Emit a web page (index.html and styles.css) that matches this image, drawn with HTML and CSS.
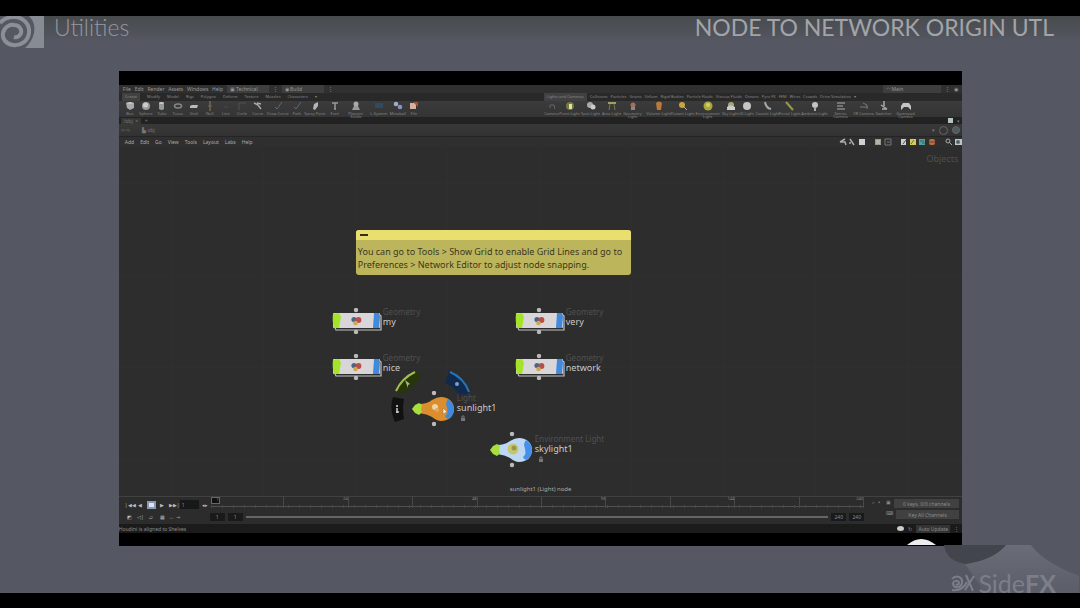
FILE: index.html
```html
<!DOCTYPE html>
<html lang="en">
<head>
<meta charset="utf-8">
<title>Node to Network Origin UTL</title>
<link rel="stylesheet" href="styles.css">
</head>
<body>
<svg class="defs" aria-hidden="true">
  <symbol id="box" viewBox="0 0 10 10"><path d="M1 2l4-1 4 1v5L5 9 2 7z" fill="#a9a9a9"/><path d="M1 2l4 1 4-1-4-1z" fill="#ccc"/></symbol>
  <symbol id="ball" viewBox="0 0 10 10"><circle cx="5" cy="5" r="4" fill="#999"/><circle cx="4.500" cy="4" r="2.500" fill="#ccc"/></symbol>
  <symbol id="tube" viewBox="0 0 10 10"><path d="M2 2v6q3 2 5 0V2z" fill="#999"/><ellipse cx="4.500" cy="2" rx="2.500" ry="1" fill="#ccc"/></symbol>
  <symbol id="torus" viewBox="0 0 10 10"><ellipse cx="5" cy="5" rx="3.500" ry="2" fill="none" stroke="#888" stroke-width="1.500"/></symbol>
  <symbol id="grid" viewBox="0 0 10 10"><path d="M1 5l2-1h6L8 7H1z" fill="#bbb"/></symbol>
  <symbol id="null" viewBox="0 0 10 10"><path d="M5 0v10" stroke="#96804e"/><path d="M3 5h4" stroke="#666"/></symbol>
  <symbol id="line" viewBox="0 0 10 10"><path d="M3 6h4" stroke="#4a4a4a"/></symbol>
  <symbol id="arc" viewBox="0 0 10 10"><path d="M2 9V2h7" fill="none" stroke="#505050"/></symbol>
  <symbol id="curve" viewBox="0 0 10 10"><path d="M1 2l4 2 3 4M4 2l4 1" fill="none" stroke="#aaa" stroke-width="1.500"/></symbol>
  <symbol id="pen" viewBox="0 0 10 10"><path d="M2 6l2 2 5-7" fill="none" stroke="#5c6875"/></symbol>
  <symbol id="spray" viewBox="0 0 10 10"><path d="M3 8l1-5 4-2v4L5 9z" fill="#b5b5b5"/></symbol>
  <symbol id="type" viewBox="0 0 10 10"><path d="M2 2h6M5 2v6M4 8h2" fill="none" stroke="#999" stroke-width="1.500"/></symbol>
  <symbol id="solids" viewBox="0 0 10 10"><circle cx="5" cy="3" r="2.500" fill="#aaa"/><path d="M1 9l2-4h4l2 4z" fill="#999"/></symbol>
  <symbol id="lsys" viewBox="0 0 10 10"><path d="M1 2h8v5H1z" fill="#304a60"/></symbol>
  <symbol id="meta" viewBox="0 0 10 10"><circle cx="3" cy="3" r="2.300" fill="#9eaccc"/><circle cx="7" cy="6" r="2.300" fill="#8294c4"/></symbol>
  <symbol id="file" viewBox="0 0 10 10"><path d="M1 2h6v6H1z" fill="#d5b3a0"/><path d="M4 1h5v5z" fill="#a9502c"/></symbol>
  <symbol id="cam" viewBox="0 0 10 10"><path d="M3 7V4h4l1 4" fill="none" stroke="#666"/></symbol>
  <symbol id="bulb" viewBox="0 0 10 10"><circle cx="5" cy="5" r="4" fill="#77783c"/><path d="M4 3h3v5H4z" fill="#e0e0ac"/></symbol>
  <symbol id="spot" viewBox="0 0 10 10"><circle cx="4" cy="4" r="3" fill="#aaa"/><circle cx="7" cy="6" r="2.500" fill="#ccc"/></symbol>
  <symbol id="area" viewBox="0 0 10 10"><path d="M1 2h8" stroke="#b9ba6b" stroke-width="1.600"/><path d="M3 3L2 9M7 3l1 6" stroke="#777a47"/></symbol>
  <symbol id="geo" viewBox="0 0 10 10"><circle cx="5" cy="4" r="2.500" fill="#a76e60"/><path d="M3 6h4v3H3z" fill="#888"/></symbol>
  <symbol id="vol" viewBox="0 0 10 10"><path d="M2 2q3-3 6 0L7 9H3z" fill="#ba7939"/></symbol>
  <symbol id="dist" viewBox="0 0 10 10"><circle cx="4" cy="4" r="3" fill="#c9a438"/><path d="M5 5l4 4" stroke="#d8b849"/></symbol>
  <symbol id="env" viewBox="0 0 10 10"><circle cx="5" cy="5" r="4.500" fill="#aaa83d"/><circle cx="5" cy="4" r="2" fill="#d2ce72"/></symbol>
  <symbol id="sky" viewBox="0 0 10 10"><circle cx="5" cy="4" r="3" fill="#aaa77a"/><path d="M1 6q3-3 8 0v3H1z" fill="#ccc"/></symbol>
  <symbol id="gi" viewBox="0 0 10 10"><circle cx="5" cy="5" r="4" fill="#c6c6c6"/></symbol>
  <symbol id="caustic" viewBox="0 0 10 10"><path d="M2 1q1 6 6 7" fill="none" stroke="#a7a7a7" stroke-width="2"/></symbol>
  <symbol id="portal" viewBox="0 0 10 10"><path d="M1 1l7 8" stroke="#949b45" stroke-width="2"/></symbol>
  <symbol id="amb" viewBox="0 0 10 10"><circle cx="5" cy="4" r="3" fill="#c4c4c4"/><path d="M4 6h2v4H4z" fill="#aaa"/></symbol>
  <symbol id="stereo" viewBox="0 0 10 10"><path d="M1 2h8M1 5h6M1 8h8" stroke="#888" stroke-width="1.400"/></symbol>
  <symbol id="vr" viewBox="0 0 10 10"><path d="M1 6h8M4 2l4 2v4" fill="none" stroke="#777"/></symbol>
  <symbol id="switch" viewBox="0 0 10 10"><path d="M5 0v5M2 4l6 4M3 8h5" stroke="#aaa" stroke-width="1.500"/></symbol>
  <symbol id="pad" viewBox="0 0 10 10"><path d="M0 9V5l2-3h6l2 3v4L7 6H3z" fill="#c5c5c5"/></symbol>
  <symbol id="geonode" viewBox="0 0 50 26">
    <circle cx="24" cy="2" r="2.200" fill="#b9b9b9"/><circle cx="24" cy="24" r="2.200" fill="#b9b9b9"/>
    <path d="M3 20l1 2h45V8l-1-1" fill="none" stroke="#c4c4c4" stroke-width="1.200"/><rect x="1" y="5" width="47" height="15" rx="1" fill="#d9d6da"/>
    <path d="M1 6l6-1 2 4-2 11H2q-2-8-1-14z" fill="#a5e32b"/><path d="M42 5h5l1 3-1 12h-6z" fill="#4189db"/>
    <circle cx="22" cy="11.500" r="2.600" fill="#506481"/><circle cx="26.500" cy="12" r="2.900" fill="#b84e45"/><circle cx="23.500" cy="15" r="2.300" fill="#c9a950"/>
  </symbol>
  <symbol id="lock" viewBox="0 0 6 6"><path d="M1 3h4v3H1z" fill="#777"/><path d="M2 3V1h2v2" fill="none" stroke="#777"/></symbol>
</svg>

<div class="letterbox"></div>
<div class="slide">
  <header class="slide-head">
    <svg class="spiral" viewBox="0 0 44 32" aria-hidden="true">
      <rect width="44" height="32" fill="#878b94"/>
      <path d="M0 0h29q7 7 5 17-2 9-9 15H0z" fill="#555761"/>
      <path d="M0 7Q5 1 14 1c9 0 16 7 15 16-1 8-8 13-16 12C6 28 2 23 3 17c1-5 6-9 11-8 5 0 8 4 7 8-1 3-4 5-7 4" fill="none" stroke="#8b8f98" stroke-width="4"/>
    </svg>
    <span class="section">Utilities</span>
    <h1>NODE TO NETWORK ORIGIN UTL</h1>
  </header>

  <main class="window">
    <div class="app">
      <nav class="menubar">
        <div class="menus"><button>File</button><button>Edit</button><button>Render</button><button>Assets</button><button>Windows</button><button>Help</button></div>
        <button class="desk">▣ Technical</button><span>⋮</span><button class="desk">◉ Build</button><span>⋮</span>
        <button class="desk main-desk">◠ Main</button><span>⋮</span><span>◉</span>
      </nav>

      <div class="shelves">
        <section class="shelf">
          <div class="tabs"><button class="on">Create</button><button>Modify</button><button>Model</button><button>Rigs</button><button>Polygon</button><button>Deform</button><button>Texture</button><button>Muscles</button><button>Characters</button><button>▾</button></div>
          <div class="tools tools-create">
            <button><svg><use href="#box"/></svg>Box</button><button><svg><use href="#ball"/></svg>Sphere</button><button><svg><use href="#tube"/></svg>Tube</button><button><svg><use href="#torus"/></svg>Torus</button><button><svg><use href="#grid"/></svg>Grid</button><button><svg><use href="#null"/></svg>Null</button><button><svg><use href="#line"/></svg>Line</button><button><svg><use href="#arc"/></svg>Circle</button><button><svg><use href="#curve"/></svg>Curve</button><button><svg><use href="#pen"/></svg>Draw Curve</button><button><svg><use href="#pen"/></svg>Path</button><button><svg><use href="#spray"/></svg>Spray Paint</button><button><svg><use href="#type"/></svg>Font</button><button><svg><use href="#solids"/></svg>Platonic<br>Solids</button><button><svg><use href="#lsys"/></svg>L-System</button><button><svg><use href="#meta"/></svg>Metaball</button><button><svg><use href="#file"/></svg>File</button>
          </div>
        </section>
        <section class="shelf">
          <div class="tabs tabs-tight"><button class="on">Lights and Cameras</button><button>Collisions</button><button>Particles</button><button>Grains</button><button>Vellum</button><button>Rigid Bodies</button><button>Particle Fluids</button><button>Viscous Fluids</button><button>Oceans</button><button>Pyro FX</button><button>FEM</button><button>Wires</button><button>Crowds</button><button>Drive Simulation</button><button>▾</button></div>
          <div class="tools tools-lights">
            <button><svg><use href="#cam"/></svg>Camera</button><button><svg><use href="#bulb"/></svg>Point Light</button><button><svg><use href="#spot"/></svg>Spot Light</button><button><svg><use href="#area"/></svg>Area Light</button><button><svg><use href="#geo"/></svg>Geometry<br>Light</button><button><svg><use href="#vol"/></svg>Volume Light</button><button><svg><use href="#dist"/></svg>Distant Light</button><button><svg><use href="#env"/></svg>Environment<br>Light</button><button><svg><use href="#sky"/></svg>Sky Light</button><button><svg><use href="#gi"/></svg>GI Light</button><button><svg><use href="#caustic"/></svg>Caustic Light</button><button><svg><use href="#portal"/></svg>Portal Light</button><button><svg><use href="#amb"/></svg>Ambient Light</button><button><svg><use href="#stereo"/></svg>Stereo<br>Camera</button><button><svg><use href="#vr"/></svg>VR Camera</button><button><svg><use href="#switch"/></svg>Switcher</button><button><svg><use href="#pad"/></svg>Gamepad<br>Camera</button>
          </div>
        </section>
      </div>

      <div class="panetabs"><button class="current">/obj &nbsp;×</button><button>+</button><span class="push swatch"></span><span>▾</span></div>
      <div class="pathbar"><button>⇦ ⇨</button><button class="obj">▙ obj</button><span class="push">▾</span><span class="ring"></span><span class="ring globe"></span></div>
      <nav class="netmenu">
        <button>Add</button><button>Edit</button><button>Go</button><button>View</button><button>Tools</button><button>Layout</button><button>Labs</button><button>Help</button>
        <svg class="neticons" viewBox="0 0 124 10" aria-hidden="true">
          <path d="M2 5l5-3M2 5h5l1 3M12 2l4 6M12 7v-2" stroke="#aaa" stroke-width="1.500" fill="none"/>
          <rect x="21" y="2" width="6" height="6" fill="#d0d0d0"/><rect x="37" y="2" width="6" height="6" fill="#999c88"/><path d="M38 4h4M38 6h4" stroke="#ccc"/>
          <path d="M47 2h6v6h-6zM49 5h3" fill="none" stroke="#777"/>
          <path d="M63 2h5v6h-5z" fill="#ccc"/><path d="M65 7l3-4" stroke="#555"/><rect x="72" y="2" width="6" height="6" fill="#d6cd55"/><path d="M73 7l3-4" stroke="#666"/>
          <rect x="81" y="2" width="6" height="6" fill="#54a09c"/><path d="M82 4h4M84 6h3" stroke="#2f6568"/><rect x="91" y="2" width="6" height="6" rx="2" fill="#be6e3d"/><path d="M91 5h6" stroke="#69452f"/>
          <circle cx="110" cy="4" r="2" fill="none" stroke="#aaa"/><path d="M111 5l3 3" stroke="#aaa"/><rect x="117" y="2" width="7" height="6" fill="#bcc4cc"/><circle cx="120" cy="5" r="2" fill="#566"/>
        </svg>
      </nav>

      <section class="network">
        <span class="context">Objects</span>
        <article class="note"><div class="note-head"><button aria-label="Minimize note"></button></div><p>You can go to Tools &gt; Show Grid to enable Grid Lines and go to Preferences &gt; Network Editor to adjust node snapping.</p></article>

        <div class="node n-my"><svg class="geo"><use href="#geonode"/></svg><div><small>Geometry</small><b>my</b></div></div>
        <div class="node n-very"><svg class="geo"><use href="#geonode"/></svg><div><small>Geometry</small><b>very</b></div></div>
        <div class="node n-nice"><svg class="geo"><use href="#geonode"/></svg><div><small>Geometry</small><b>nice</b></div></div>
        <div class="node n-network"><svg class="geo"><use href="#geonode"/></svg><div><small>Geometry</small><b>network</b></div></div>

        <svg class="radial" viewBox="0 0 84 54" aria-hidden="true">
          <path d="M6 21Q12 8 26 1l6 4-7 8-10 9z" fill="#263609"/><path d="M6 20Q12 7 25 1" fill="none" stroke="#a3bd54" stroke-width="2"/><path d="M15 9l5 4-2 1v3z" fill="#a9b894"/>
          <path d="M59 1q14 6 20 21l-10 3q-2-8-14-13z" fill="#10294d"/><path d="M60 1q14 6 19 20" fill="none" stroke="#2973b4" stroke-width="2"/><circle cx="67" cy="13" r="2" fill="#7aa0c4"/>
          <path d="M3 26l11 2q-2 10 0 20l-9 3Q-1 38 3 26z" fill="#111"/><circle cx="7" cy="35" r="1" fill="#ddd"/><path d="M7 37v5M6 41h3" fill="none" stroke="#ccc" stroke-width="1.500"/>
        </svg>
        <div class="node n-sun">
          <svg class="light" viewBox="0 0 44 36" aria-hidden="true"><circle cx="23" cy="2" r="2.200" fill="#bbb"/><circle cx="23" cy="33" r="2.200" fill="#bbb"/><path d="M8 13q8 0 13-4 5-3 9-3c8 0 13 5 13 12s-5 12-13 12q-4 0-9-4-5-3-13-4z" fill="#dc8d2e"/><path d="M1 18l3-4 4-2 3 2-1 4 1 3-3 3-4-2z" fill="#a7df3d"/><path d="M37 8c8 5 8 16 0 20-3-2-4-3-1-5 1-3 0-7-1-10 0-2 1-3 2-5z" fill="#4189dc"/><circle cx="24" cy="16" r="3" fill="#ecd3a8"/><circle cx="26" cy="19" r="2" fill="#e3a65b"/><path d="M32 17l4 4-2 1-2 1z" fill="#eee" stroke="#776" stroke-width=".5"/></svg>
          <div><small>Light</small><b>sunlight1</b><svg class="lock"><use href="#lock"/></svg></div>
        </div>
        <div class="node n-sky">
          <svg class="light" viewBox="0 0 44 36" aria-hidden="true"><circle cx="23" cy="2" r="2.200" fill="#bbb"/><circle cx="23" cy="33" r="2.200" fill="#bbb"/><path d="M8 13q8 0 13-4 5-3 9-3c8 0 13 5 13 12s-5 12-13 12q-4 0-9-4-5-3-13-4z" fill="#bcd8f5"/><path d="M1 18l3-4 4-2 3 2-1 4 1 3-3 3-4-2z" fill="#a7df3d"/><path d="M37 8c8 5 8 16 0 20-3-2-4-3-1-5 1-3 0-7-1-10 0-2 1-3 2-5z" fill="#4590e8"/><circle cx="24" cy="17" r="5.500" fill="#c7c66b"/><circle cx="25" cy="16" r="2.500" fill="#999456"/></svg>
          <div><small>Environment Light</small><b>skylight1</b><svg class="lock"><use href="#lock"/></svg></div>
        </div>
        <span class="hint">sunlight1 (Light) node</span>
      </section>

      <footer class="playbar">
        <div class="transport">
          <div><button>|◀◀</button><button>◀</button><button class="stop" aria-label="Stop"></button><button>▶</button><button>▶▶|</button><input aria-label="Frame" value="1"><button>◂▸</button></div>
          <div><button>◩</button><button>◁|</button><button>▱</button><button>▦</button><span>↔</span><span>⇥</span></div>
        </div>
        <div class="timeline">
          <div class="ruler"><span class="playhead">1</span><span></span><span>24</span><span></span><span>48</span><span></span><span>96</span><span></span><span>144</span><span></span><span>240</span></div>
          <div class="range"><input aria-label="Start" value="1"><input aria-label="Range start" value="1"><span class="track"></span><input aria-label="Range end" value="240"><input aria-label="End" value="240"></div>
        </div>
        <div class="keys">
          <span>⌕ &nbsp;▾</span>
          <div><div><span>▣</span><button>0 keys, 0/0 channels</button></div><div><span>⌨</span><button>Key All Channels</button></div></div>
        </div>
      </footer>
      <div class="status"><span>Houdini is aligned to Shelves</span><span class="dot"></span><span>↻</span><button>Auto Update</button><span>⋮</span></div>
    </div>
  </main>

  <footer class="brand">
    <svg class="swoosh" viewBox="0 0 180 54" aria-hidden="true">
      <defs><linearGradient id="haze" x1="0" y1="0" x2="0" y2="1"><stop offset="0" stop-color="#6a6d78"/><stop offset="1" stop-color="#5b5e69"/></linearGradient></defs>
      <path d="M104 6h27q12 17 48 31v17H85L65 25q30-4 39-19z" fill="url(#haze)"/>
      <path d="M44 6h62Q95 20 66 25 46 22 44 6z" fill="#42454c"/>
      <path d="M7 6Q21-6 36 6z" fill="#eee"/>
    </svg>
    <div class="sidefx"><svg viewBox="0 0 24 18" aria-hidden="true"><path d="M1 5c4-5 11-2 10 4-1 5-8 6-9 1 0-4 6-4 6-1 0 2-2 2-3 1M1 16c7 1 12-2 15-8M15 1l7 16M23 2l-9 14" fill="none" stroke="#7c7f89" stroke-width="2"/></svg><span>Side<strong>FX</strong></span></div>
  </footer>
</div>
<div class="letterbox"></div>
</body>
</html>
```

FILE: styles.css
```css
* { box-sizing: border-box; }
body { margin: 0; min-height: 100vh; display: flex; flex-direction: column; background: #000; font-family: "Noto Sans", sans-serif; }
button, input { font: inherit; color: inherit; background: none; border: 0; padding: 0; margin: 0; min-width: 0; white-space: nowrap; }
.defs { display: none; }
.letterbox { height: 15px; flex: none; }
.slide { flex: 1; display: flex; flex-direction: column; background: #555762; border-top: 1px solid #000; }

.slide-head { height: 55px; display: flex; align-items: flex-start; font: 23px/22px Lato, sans-serif; color: #9698a0; background: linear-gradient(#484b4d, #50535b 18px, #555762 24px); }
.spiral { width: 44px; height: 32px; }
.section { margin-left: 10px; font-weight: 300; }
h1 { margin: 0 26px 0 auto; font: 400 23px/22px Lato, sans-serif; color: #a2a4a9; }

.window { width: 78.1%; margin-left: 11%; padding: 14px 0 13px; background: #000; }
.app { background: #2b2b2b; color: #8b8b8b; font-size: 5px; line-height: 6px; }

.menubar { height: 8px; display: flex; align-items: center; gap: 4px; padding: 0 4px; background: #303030; color: #999; }
.menus { display: flex; gap: 4px; width: 100px; }
.desk { width: 42px; height: 8px; background: #3e3e3e; text-align: left; padding-left: 3px; }
.main-desk { width: 58px; margin-left: auto; }
.shelves { display: grid; grid-template-columns: 50% 50%; background: #292929; }
.tabs { height: 8px; display: flex; align-items: center; gap: 7px; padding-left: 3px; font-size: 4px; color: #888; }
.tabs-tight { gap: 3px; }
.tabs .on { background: #414141; height: 8px; padding: 0 3px; }
.tools { height: 16px; display: grid; background: linear-gradient(#3b3b3b, #343434); font-size: 4px; color: #858585; padding-left: 3px; }
.tools-create { grid-template-columns: repeat(9, 16px) 24px 14px 22px 18px 24px 22px 16px 16px; }
.tools-lights { grid-template-columns: 16px 20px 22px 20px 22px 30px 18px 32px 14px 18px 24px 20px 30px 22px 24px 16px 28px; }
.tools button { display: flex; flex-direction: column; align-items: center; line-height: 3px; }
.tools svg { width: 10px; height: 10px; flex: none; margin-bottom: 1px; }
.panetabs, .pathbar { display: flex; align-items: center; padding: 0 2px; }
.panetabs { height: 7px; gap: 4px; background: #222; color: #777; }
.current { width: 20px; background: #363636; }
.pathbar { height: 13px; gap: 4px; background: linear-gradient(#393939, #323232); border-bottom: 1px solid #242424; color: #777; }
.push { margin-left: auto; }
.swatch { width: 5px; height: 5px; background: #b6c2bd; }
.ring { width: 9px; height: 9px; border: 1px solid #666; border-radius: 50%; }
.globe { width: 8px; height: 8px; background: #4e5b60; }
.obj { margin-left: 8px; }
.netmenu { height: 10px; display: flex; align-items: center; gap: 6px; padding-left: 6px; background: #2f2f2f; color: #aaa; }
.neticons { width: 124px; height: 10px; margin-left: auto; }

.network { position: relative; height: 349px; overflow: hidden; background-color: #2d2d2d; background-image: linear-gradient(#2f2f2f 1px, transparent 1px), linear-gradient(90deg, #2f2f2f 1px, transparent 1px); background-size: 92px 92px; background-position: 52px 36px; }
.context { position: absolute; right: 4px; top: 6px; font-size: 9px; line-height: 12px; color: #4d4d4d; }
.note { position: absolute; left: 237px; top: 83px; width: 275px; border-radius: 3px; overflow: hidden; background: #bdb55c; color: #3a381f; }
.note-head { height: 10px; background: #e8df70; display: flex; align-items: center; padding-left: 4px; }
.note-head button { width: 8px; height: 2px; background: #333017; }
.note p { margin: 0; padding: 5px 0 4px 2px; font-size: 9px; line-height: 13px; }
.node { position: absolute; display: flex; gap: 1px; white-space: nowrap; }
.node div { display: flex; flex-direction: column; }
.node small { font-size: 8px; line-height: 8px; color: #505050; }
.node b { font-size: 9px; line-height: 11px; font-weight: 400; color: #c9c9c9; }
.geo { width: 50px; height: 26px; }
.light { width: 44px; height: 36px; }
.n-my { left: 213px; top: 161px; }
.n-very { left: 396px; top: 161px; }
.n-nice { left: 213px; top: 207px; }
.n-network { left: 396px; top: 207px; }
.n-sun { left: 292px; top: 244px; }
.n-sky { left: 370px; top: 285px; }
.n-sun div, .n-sky div { padding: 3px 0 0 1px; }
.lock { width: 6px; height: 6px; margin: 2px 3px; }
.radial { position: absolute; left: 271px; top: 224px; width: 84px; height: 54px; }
.hint { position: absolute; left: 50%; bottom: 3px; transform: translateX(-50%); font-size: 6px; line-height: 8px; color: #aaa; }

.playbar { height: 28px; display: flex; background: #2c2c2c; border-top: 1px solid #414141; }
.transport { width: 91px; padding: 1px 0 1px 6px; display: grid; grid-template-rows: 13px 12px; }
.transport > div { display: flex; gap: 2px; align-items: center; }
.transport button { width: 9px; height: 8px; text-align: center; color: #bbb; }
.transport .stop { border: 2px solid #8999b5; background: #dce4ef; }
.transport input { width: 19px; height: 9px; background: #181818; padding-left: 2px; }
.timeline { flex: 1; }
.ruler { height: 13px; display: flex; justify-content: space-between; margin: 0 0 2px 1px; background: repeating-linear-gradient(90deg, #484848 0 1px, transparent 1px 11px) 0 8px / 100% 3px no-repeat, linear-gradient(#505050, #505050) 0 9px / 100% 1px no-repeat; font-size: 4px; line-height: 4px; }
.ruler span { border-right: 1px solid #484848; min-width: 9px; height: 11px; text-align: right; }
.ruler .playhead { border: 1px solid #666; background: #111; height: 7px; }
.range { display: flex; gap: 3px; height: 10px; align-items: center; }
.range input { width: 15px; height: 8px; background: #1a1a1a; text-align: center; }
.track { flex: 1; height: 2px; background: #666; }
.keys { width: 98px; display: flex; gap: 6px; padding: 2px 3px 0 8px; }
.keys > div { flex: 1; display: grid; gap: 2px; align-content: start; }
.keys > div > div { display: flex; gap: 3px; }
.keys button { flex: 1; height: 9px; background: #414141; }
.status { height: 9px; display: flex; align-items: center; gap: 4px; padding-right: 3px; background: #1b1b1b; }
.dot { width: 7px; height: 5px; border-radius: 50%; background: #ccc; margin-left: auto; }
.status button { width: 34px; height: 8px; background: #343434; }

.brand { flex: 1; position: relative; min-height: 47px; display: flex; justify-content: flex-end; align-items: flex-end; padding-right: 24px; }
.swoosh { position: absolute; right: 0; bottom: 0; width: 180px; height: 54px; }
.sidefx { position: relative; display: flex; align-items: center; gap: 3px; font: 400 25px/20px Lato, sans-serif; color: #7c7f89; }
.sidefx svg { width: 24px; height: 18px; }
.sidefx strong { font-weight: 700; }
```
